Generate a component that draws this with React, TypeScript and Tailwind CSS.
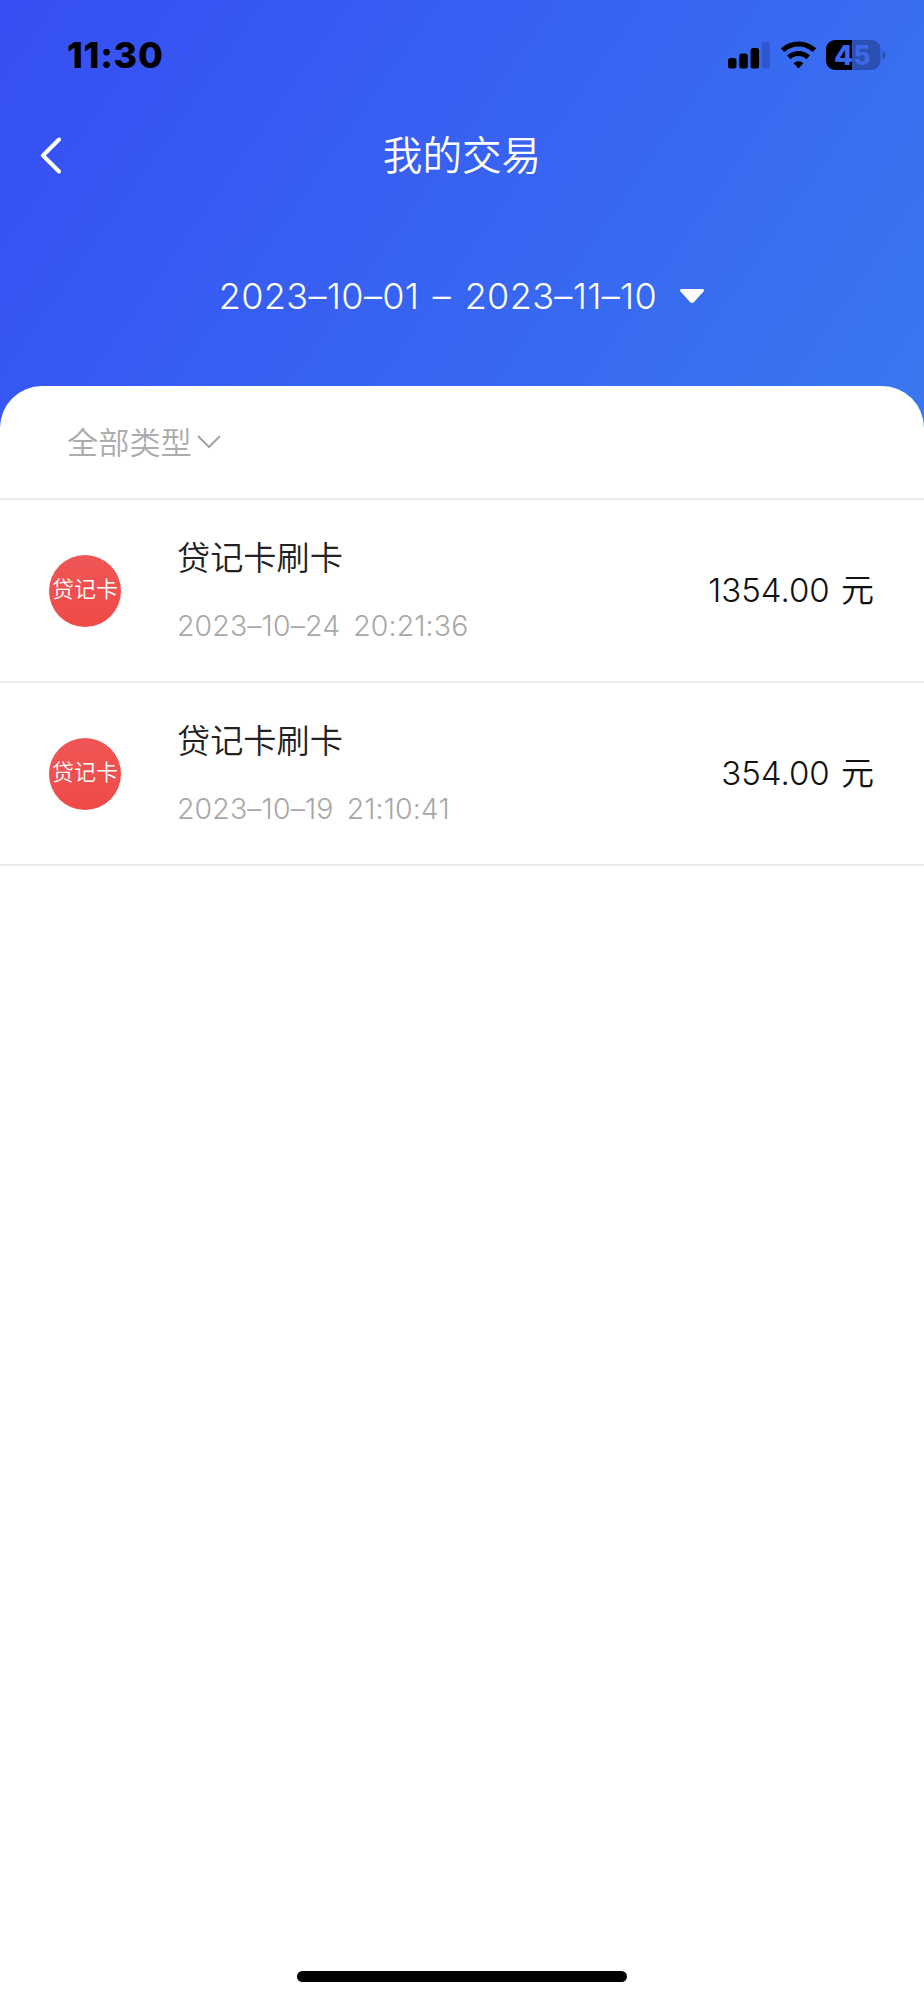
interface Transaction {
    label: string;
    title: string;
    time: string;
    amount: string;
}

const transactions: Transaction[] = [
    { label: '贷记卡', title: '贷记卡刷卡', time: '2023–10–24 20:21:36', amount: '1354.00' },
    { label: '贷记卡', title: '贷记卡刷卡', time: '2023–10–19 21:10:41', amount: '354.00' },
]

function StatusBar() {
    return (
        <div className="flex h-[110px] items-center justify-between pl-[67px] pr-[37px]">
            <span className="text-[36px] leading-none font-extrabold tracking-[0.7px] text-black">11:30</span>
            <svg width="160" height="32" viewBox="0 0 160 32">
                <rect x="1" y="19" width="8.5" height="10.5" rx="2.5" />
                <rect x="12.3" y="14.5" width="8.5" height="15" rx="2.5" />
                <rect x="23.6" y="9" width="8.5" height="20.5" rx="2.5" />
                <rect x="34.9" y="3" width="8" height="26.5" rx="2.5" fill="#2f55cf" />
                <g fill="none" stroke="#000" strokeWidth="5">
                    <path d="M55.5 11.2a23.5 23.5 0 0 1 32 0" />
                    <path d="M61.8 18.4a14.2 14.2 0 0 1 19.4 0" />
                </g>
                <path d="M66.6 24.2a7.3 7.3 0 0 1 9.8 0l-4.9 5.3z" />
                <path d="M108 1h17v30h-17a9 9 0 0 1-9-9V10a9 9 0 0 1 9-9z" />
                <path d="M125 1h19.500a9 9 0 0 1 9 9v12a9 9 0 0 1-9 9H125z" fill="#2a50b4" />
                <path d="M155.500 11.500c2 .8 3 2.400 3 4.500s-1 3.700-3 4.500z" fill="#2a50b4" />
                <text x="107" y="25.500" fontSize="26.500" fontWeight="800" textLength="19" lengthAdjust="spacingAndGlyphs" fill="#3b68f0">4</text>
                <text x="126.500" y="25.500" fontSize="26.500" fontWeight="800" textLength="17" lengthAdjust="spacingAndGlyphs" fill="#3d68e6">5</text>
            </svg>
        </div>
    )
}

function TransactionRow(props: Transaction) {
    return (
        <li className="flex h-[183px] items-center border-b-2 border-[#ececec] pr-[50px] pl-[49px]">
            <div className="flex size-[72px] shrink-0 items-center justify-center rounded-full bg-linear-to-b from-[#ee5655] to-[#ef4a48] pb-[2px] text-[22px] font-[350] whitespace-nowrap text-white">
                {props.label}
            </div>
            <div className="ml-14 flex flex-1 flex-col gap-[28px] pt-[3px]">
                <span className="text-[33.2px] leading-10 font-[350] text-[#222222]">{props.title}</span>
                <span className="text-[28.5px] leading-10 font-light tracking-[0.1px] text-[#a8a8a8] [word-spacing:5px]">{props.time}</span>
            </div>
            <span className="text-[33px] font-[360] text-[#111111] [word-spacing:2px]">{props.amount} 元</span>
        </li>
    )
}

export default function App() {
    return (
        <main className="flex h-[2000px] w-[924px] flex-col bg-white font-['Inter','Noto_Sans_CJK_SC',sans-serif]">
            <div className="h-[440px] shrink-0 bg-linear-[125deg] from-[#364ef3] to-[#3978f0]">
                <StatusBar />
                <header className="grid h-[90px] grid-cols-[1fr_auto_1fr] items-center">
                    <svg className="ml-[40px]" width="24" height="38" viewBox="0 0 24 38" fill="none" stroke="#fff" strokeWidth="4" strokeLinecap="round" strokeLinejoin="round">
                        <path d="M19 3.500 3 19.500l16 16" />
                    </svg>
                    <h1 className="pt-[4px] text-[39.6px] leading-none font-[350] text-white">我的交易</h1>
                </header>
                <div className="flex h-[191px] items-center justify-center gap-[22px] text-[36px] font-light text-white">
                    <span className="tracking-[0.35px] [word-spacing:3px]">2023–10–01 – 2023–11–10</span>
                    <svg width="26" height="16" viewBox="0 0 26 16" fill="#fff">
                        <path d="M2.500 1h21c1.500 0 2 1.500 1 2.500L15 14q-2 1.800-4 0L1.500 3.500C.5 2.500 1 1 2.500 1z" />
                    </svg>
                </div>
            </div>
            <section className="-mt-[54px] flex-1 rounded-t-[42px] bg-white">
                <div className="flex h-[114px] items-center gap-[5px] border-b-2 border-[#ececec] pl-[67px] text-[31.2px] font-[350] text-[#acacac]">
                    <span className="pt-[2px]">全部类型</span>
                    <svg width="24" height="16" viewBox="0 0 24 16" fill="none" stroke="#a3a3a3" strokeWidth="2">
                        <path d="m1 2 11 11L23 2" />
                    </svg>
                </div>
                <ul>
                    {transactions.map((item) => (
                        <TransactionRow key={item.time} {...item} />
                    ))}
                </ul>
            </section>
            <div className="mx-auto mb-[18px] h-[11px] w-[330px] rounded-full bg-black" />
        </main>
    )
}
